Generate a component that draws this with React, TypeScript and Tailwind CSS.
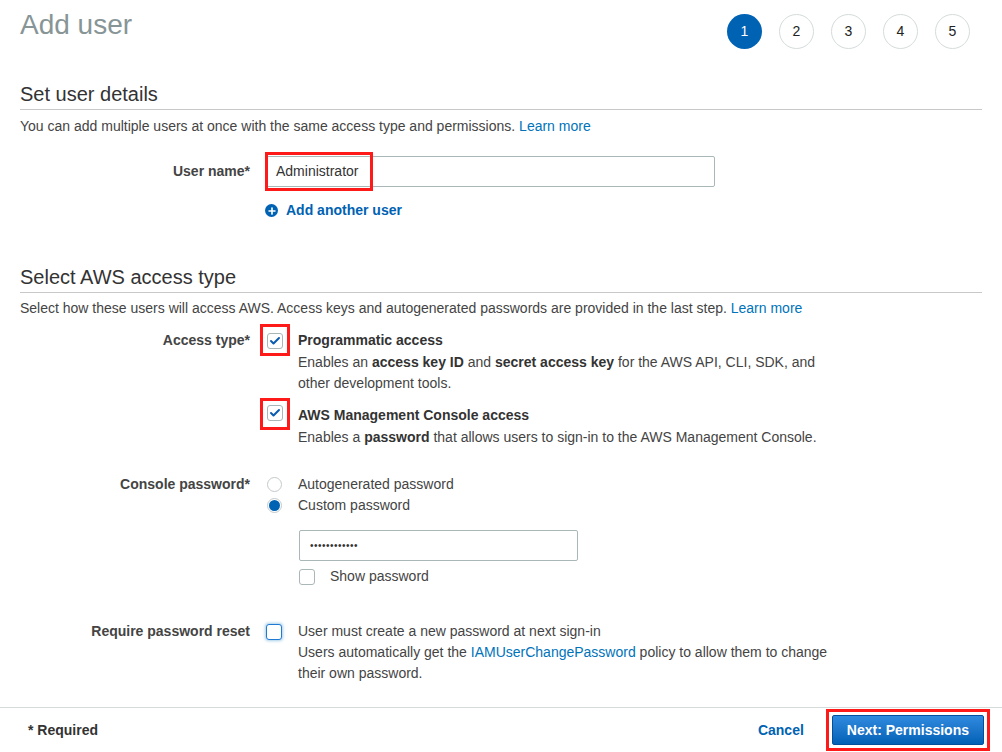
import { Check, Plus } from "lucide-react"

const font = { fontFamily: '"Liberation Sans", Arial, sans-serif' }

function CheckBox({ checked, focused }: { checked?: boolean; focused?: boolean }) {
  return (
    <div
      className={
        "w-4 h-4 rounded-[3px] border bg-white flex items-center justify-center shrink-0 " +
        (focused
          ? "border-[#1f7ad4] shadow-[0_0_3px_1px_rgba(0,115,187,0.35)]"
          : "border-[#aab7b8]")
      }
    >
      {checked && <Check className="w-3 h-3 text-[#0a5cb0]" strokeWidth={4} />}
    </div>
  )
}

function Radio({ selected }: { selected?: boolean }) {
  return (
    <div className="w-[15px] h-[15px] rounded-full border border-[#c4c9cc] bg-white flex items-center justify-center shrink-0">
      {selected && <div className="w-[11px] h-[11px] rounded-full bg-[#0062b3]" />}
    </div>
  )
}

function Row({ label, children, className = "" }: { label: string; children: React.ReactNode; className?: string }) {
  return (
    <div className={"flex " + className}>
      <div className="w-[230px] shrink-0 text-right font-bold text-[#444]">{label}</div>
      <div className="ml-[15px] flex-1">{children}</div>
    </div>
  )
}

export default function App() {
  return (
    <div className="w-[1002px] h-[752px] bg-white text-[14px] leading-[21px] text-[#444] overflow-hidden flex flex-col" style={font}>
      <div className="flex-1 px-[20px]">
        <div className="flex items-start justify-between pt-[8px]">
          <h1 className="text-[28px] leading-[34px] text-[#879596]">Add user</h1>
          <div className="flex gap-[17px] pt-[6px] pr-[12px]">
            {[1, 2, 3, 4, 5].map((n) => (
              <div
                key={n}
                className={
                  "w-[35px] h-[35px] rounded-full flex items-center justify-center text-[14px] " +
                  (n === 1 ? "bg-[#0062b3] text-white" : "border border-[#d5dbdb] text-[#222]")
                }
              >
                {n}
              </div>
            ))}
          </div>
        </div>

        <h2 className="mt-[33px] text-[20px] leading-[24px] text-[#333] pb-[3px] border-b border-[#c8c8c8]">
          Set user details
        </h2>
        <p className="mt-[6px]">
          You can add multiple users at once with the same access type and permissions.{" "}
          <span className="text-[#0073bb]">Learn more</span>
        </p>

        <Row label="User name*" className="mt-[19px] items-center">
          <div className="relative w-[450px] h-[31px] border border-[#aab7b8] rounded-[2px] flex items-center pl-[10px] text-[#333]">
            Administrator
            <div className="absolute left-[-1px] top-[-5px] w-[108px] h-[39px] border-[3px] border-[#ff1a1a]" />
          </div>
        </Row>
        <Row label="" className="mt-[13px]">
          <div className="flex items-center gap-[8px] text-[#0062b3] font-bold">
            <div className="w-[13px] h-[13px] rounded-full bg-[#0062b3] flex items-center justify-center">
              <Plus className="w-[10px] h-[10px] text-white" strokeWidth={4} />
            </div>
            Add another user
          </div>
        </Row>

        <h2 className="mt-[44px] text-[20px] leading-[24px] text-[#333] pb-[3px] border-b border-[#c8c8c8]">
          Select AWS access type
        </h2>
        <p className="mt-[5px]">
          Select how these users will access AWS. Access keys and autogenerated passwords are provided in the last step.{" "}
          <span className="text-[#0073bb]">Learn more</span>
        </p>

        <Row label="Access type*" className="mt-[11px]">
          <div className="flex">
            <div className="relative mt-[2.5px] ml-[2px] h-4">
              <CheckBox checked />
              <div className="absolute -left-[7px] -top-[9px] w-[30px] h-[32px] border-[3px] border-[#ff1a1a]" />
            </div>
            <div className="ml-[15px]">
              <div className="font-bold text-[#333]">Programmatic access</div>
              <div className="w-[530px] mt-[1px]">
                Enables an <b className="text-[#333]">access key ID</b> and <b className="text-[#333]">secret access key</b> for the AWS API, CLI, SDK, and other development tools.
              </div>
            </div>
          </div>
          <div className="flex mt-[11px]">
            <div className="relative mt-[0px] ml-[2px] h-4">
              <CheckBox checked />
              <div className="absolute -left-[7px] -top-[7px] w-[30px] h-[32px] border-[3px] border-[#ff1a1a]" />
            </div>
            <div className="ml-[15px]">
              <div className="font-bold text-[#333]">AWS Management Console access</div>
              <div className="mt-[1px]">
                Enables a <b className="text-[#333]">password</b> that allows users to sign-in to the AWS Management Console.
              </div>
            </div>
          </div>
        </Row>

        <Row label="Console password*" className="mt-[26px]">
          <div className="flex items-center">
            <div className="ml-[2px]"><Radio /></div>
            <span className="ml-[16px]">Autogenerated password</span>
          </div>
          <div className="flex items-center">
            <div className="ml-[2px]"><Radio selected /></div>
            <span className="ml-[16px]">Custom password</span>
          </div>
          <div className="ml-[34px] mt-[14px] w-[279px] h-[31px] border border-[#aab7b8] rounded-[2px] flex items-center pl-[10px] text-[10px] tracking-[0.5px] text-[#333]">
            ••••••••••••
          </div>
          <div className="ml-[34px] mt-[5px] flex items-center">
            <CheckBox />
            <span className="ml-[15px]">Show password</span>
          </div>
        </Row>

        <Row label="Require password reset" className="mt-[34px]">
          <div className="flex">
            <div className="ml-[1px] mt-[2.5px]"><CheckBox focused /></div>
            <div className="ml-[16px]">
              <div>User must create a new password at next sign-in</div>
              <div className="w-[540px]">
                Users automatically get the <span className="text-[#0073bb]">IAMUserChangePassword</span> policy to allow them to change their own password.
              </div>
            </div>
          </div>
        </Row>
      </div>

      <div className="h-[45px] border-t border-[#d5dbdb] flex items-center justify-between pl-[28px] pr-[12px]">
        <span className="font-bold text-[#333]">* Required</span>
        <div className="flex items-center">
          <span className="font-bold text-[#0062b3]">Cancel</span>
          <div className="ml-[22px] border-[3px] border-[#ff1a1a] p-[3px]">
            <div className="h-[30px] px-[14px] rounded-[2px] border border-[#00509e] bg-gradient-to-b from-[#2f8be0] to-[#0061b5] text-white font-bold flex items-center">
              Next: Permissions
            </div>
          </div>
        </div>
      </div>
    </div>
  )
}
